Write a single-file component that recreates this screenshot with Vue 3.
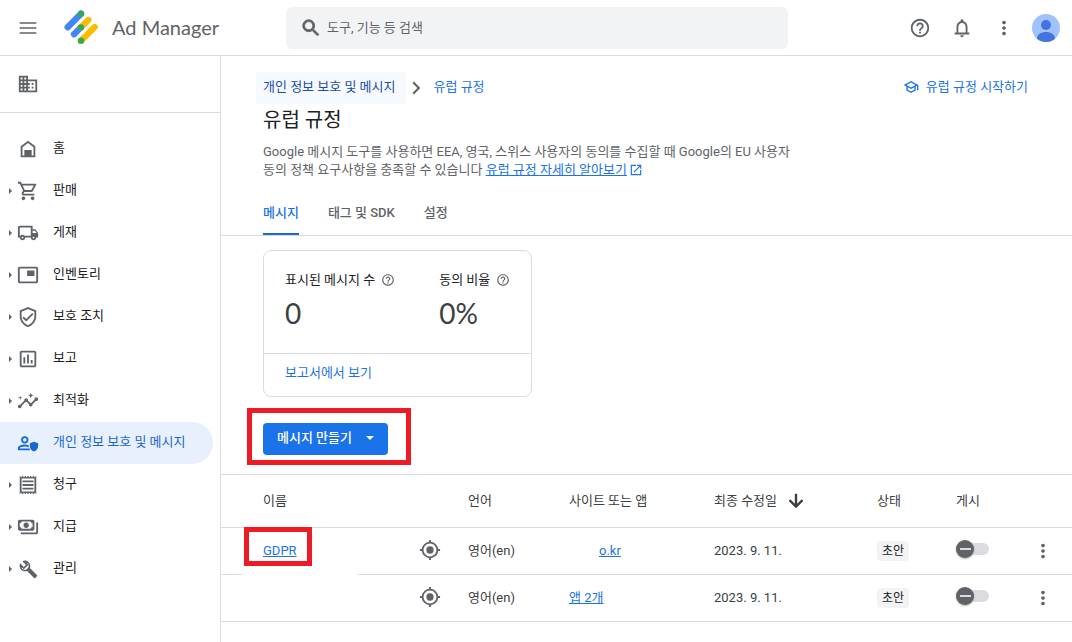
<script setup>
import { ref } from 'vue'

const icons = {
  menu: 'M2 19h20v-2H2v2zm0-6h20v-2H2v2zm0-8v2h20V5H2z',
  domain: 'M12 7V3H2v18h20V7H12zM6 19H4v-2h2v2zm0-4H4v-2h2v2zm0-4H4V9h2v2zm0-4H4V5h2v2zm4 12H8v-2h2v2zm0-4H8v-2h2v2zm0-4H8V9h2v2zm0-4H8V5h2v2zm10 12h-8v-2h2v-2h-2v-2h2v-2h-2V9h8v10zm-2-8h-2v2h2v-2zm0 4h-2v2h2v-2z',
  search: 'M15.5 14h-.79l-.28-.27A6.471 6.471 0 0 0 16 9.5 6.5 6.5 0 1 0 9.5 16c1.61 0 3.09-.59 4.23-1.57l.27.28v.79l5 4.99L20.49 19l-4.99-5zm-6 0C7.01 14 5 11.99 5 9.5S7.01 5 9.5 5 14 7.01 14 9.5 11.99 14 9.5 14z',
  help: 'M11 18h2v-2h-2v2zm1-16C6.48 2 2 6.48 2 12s4.48 10 10 10 10-4.48 10-10S17.52 2 12 2zm0 18c-4.41 0-8-3.59-8-8s3.59-8 8-8 8 3.59 8 8-3.59 8-8 8zm0-14c-2.21 0-4 1.79-4 4h2c0-1.1.9-2 2-2s2 .9 2 2c0 2-3 1.75-3 5h2c0-2.25 3-2.5 3-5 0-2.21-1.79-4-4-4z',
  bell: 'M12 22c1.1 0 2-.9 2-2h-4c0 1.1.9 2 2 2zm6-5v-6c0-3.07-1.63-5.64-4.5-6.32V4c0-.83-.67-1.5-1.5-1.5s-1.5.67-1.5 1.5v.68C7.64 5.36 6 7.92 6 11v6H4v2h16v-2h-2zm-2 0H8v-6c0-2.48 1.51-4.5 4-4.5s4 2.02 4 4.5v6z',
  more: 'M12 8c1.1 0 2-.9 2-2s-.9-2-2-2-2 .9-2 2 .9 2 2 2zm0 2c-1.1 0-2 .9-2 2s.9 2 2 2 2-.9 2-2-.9-2-2-2zm0 6c-1.1 0-2 .9-2 2s.9 2 2 2 2-.9 2-2-.9-2-2-2z',
  home: 'M12 3 4 9v12h16V9zm0 2.500L18 10v9h-2v-6H8v6H6v-9z',
  cart: 'M15.55 13c.75 0 1.41-.41 1.75-1.03l3.58-6.49A.996.996 0 0 0 20.01 4H5.21l-.94-2H1v2h2l3.6 7.59-1.35 2.44C4.52 15.37 5.48 17 7 17h12v-2H7l1.1-2h7.45zM6.16 6h12.15l-2.76 5H8.53L6.16 6zM7 18c-1.1 0-1.99.9-1.99 2S5.9 22 7 22s2-.9 2-2-.9-2-2-2zm10 0c-1.1 0-1.99.9-1.99 2s.89 2 1.99 2 2-.9 2-2-.9-2-2-2z',
  truck: 'M20 8h-3V4H3c-1.1 0-2 .9-2 2v11h2c0 1.66 1.34 3 3 3s3-1.34 3-3h6c0 1.66 1.34 3 3 3s3-1.34 3-3h2v-5l-3-4zm-.5 1.5 1.96 2.5H17V9.5h2.5zM6 18c-.55 0-1-.45-1-1s.45-1 1-1 1 .45 1 1-.45 1-1 1zm2.22-3c-.55-.61-1.33-1-2.22-1s-1.67.39-2.22 1H3V6h12v9H8.22zM18 18c-.55 0-1-.45-1-1s.45-1 1-1 1 .45 1 1-.45 1-1 1z',
  inventory: 'M19 7h-8v6h8V7zm2-4H3c-1.1 0-2 .9-2 2v14c0 1.1.9 1.98 2 1.98h18c1.1 0 2-.88 2-1.98V5c0-1.1-.9-2-2-2zm0 16.01H3V4.98h18v14.03z',
  shield: 'M12 1L3 5v6c0 5.55 3.84 10.74 9 12 5.16-1.26 9-6.45 9-12V5l-9-4zm7 10c0 4.52-2.98 8.69-7 9.93-4.02-1.24-7-5.41-7-9.93V6.3l7-3.11 7 3.11V11zm-11.59.59L6 13l4 4 8-8-1.41-1.42L10 14.17z',
  report: 'M9 17H7v-7h2v7zm4 0h-2V7h2v10zm4 0h-2v-4h2v4zm2 2H5V5h14v14zm0-16H5c-1.1 0-2 .9-2 2v14c0 1.1.9 2 2 2h14c1.1 0 2-.9 2-2V5c0-1.1-.9-2-2-2z',
  insights: 'M21 8c-1.45 0-2.26 1.44-1.93 2.51l-3.55 3.56c-.3-.09-.74-.09-1.04 0l-2.55-2.55C12.27 10.45 11.46 9 10 9c-1.45 0-2.27 1.44-1.93 2.52l-4.56 4.55C2.44 15.74 1 16.55 1 18c0 1.1.9 2 2 2 1.45 0 2.26-1.44 1.93-2.51l4.55-4.56c.3.09.74.09 1.04 0l2.55 2.55C12.73 16.55 13.54 18 15 18c1.45 0 2.27-1.44 1.93-2.52l3.56-3.55C21.56 12.26 23 11.45 23 10c0-1.1-.9-2-2-2zM15 9l.94-2.07L18 6l-2.06-.93L15 3l-.92 2.07L12 6l2.08.93zM3.5 11 4 9l2-.5L4 8l-.5-2L3 8l-2 .5L3 9z',
  privacy: 'M8.5 4.5a4 4 0 1 0 0 8 4 4 0 0 0 0-8zm0 2a2 2 0 1 1 0 4 2 2 0 0 1 0-4zM1 20v-2.5C1 15 5 13.7 8.5 13.7c1.5 0 3 .2 4.3.7v2.2c-1.3-.5-2.8-.9-4.3-.9-2.7 0-5.500 1-5.500 1.800V18h10.500l1.200 2zM18.500 10.500 14 12.300v3.200c0 2.700 1.900 5.100 4.500 5.900 2.600-.8 4.500-3.200 4.500-5.900v-3.200z',
  receipt: 'M19.5 3.5L18 2l-1.5 1.5L15 2l-1.5 1.5L12 2l-1.5 1.5L9 2 7.5 3.5 6 2 4.5 3.5 3 2v20l1.5-1.5L6 22l1.5-1.5L9 22l1.5-1.5L12 22l1.5-1.5L15 22l1.5-1.5L18 22l1.5-1.5L21 22V2l-1.5 1.5zM19 19.09H5V4.91h14v14.18zM6 15h12v2H6zm0-4h12v2H6zm0-4h12v2H6z',
  payments: 'M19 14V6c0-1.100-.9-2-2-2H3c-1.100 0-2 .9-2 2v8c0 1.100.9 2 2 2h14c1.100 0 2-.9 2-2zm-2-2c-1.100 0-2 .9-2 2H5c0-1.100-.9-2-2-2V8c1.100 0 2-.9 2-2h10c0 1.100.9 2 2 2v4zm-7-5c-1.660 0-3 1.340-3 3s1.340 3 3 3 3-1.340 3-3-1.340-3-3-3zm13 0v11c0 1.100-.9 2-2 2H4v-2h17V7h2z',
  wrench: 'M21.700 18.600l-7.600-7.600c.9-2.300.3-4.700-1.400-6.400C10.900 2.700 8 2.300 5.800 3.500L9.700 7.400 7.400 9.700 3.500 5.800C2.300 8 2.700 10.900 4.600 12.700c1.700 1.700 4.200 2.300 6.400 1.400l7.600 7.600c.4.4 1 .4 1.400 0l1.700-1.700c.4-.4.4-1 0-1.400zM5.200 10.200l2.200 2.200 5-5-2-2.200 1.200.6c1.300 1.300 1.500 3.200.6 4.700l-2 2c-1.600.8-3.500.5-4.700-.8z',
  school: 'M12 3L1 9l4 2.180v6L12 21l7-3.820v-6l2-1.090V17h2V9L12 3zm6.820 6L12 12.720 5.180 9 12 5.280 18.820 9zM17 15.990l-5 2.730-5-2.730v-3.720L12 15l5-2.730v3.720z',
  external: 'M19 19H5V5h7V3H3v18h18v-9h-2v7zM14 3v2h3.590l-9.830 9.830 1.410 1.410L19 6.410V10h2V3h-7z',
  target: 'M12 8a4 4 0 1 0 0 8 4 4 0 0 0 0-8zm8.940 3A8.994 8.994 0 0 0 13 3.060V1h-2v2.060A8.994 8.994 0 0 0 3.060 11H1v2h2.060A8.994 8.994 0 0 0 11 20.940V23h2v-2.060A8.994 8.994 0 0 0 20.940 13H23v-2h-2.060zM12 19c-3.870 0-7-3.130-7-7s3.130-7 7-7 7 3.130 7 7-3.130 7-7 7z',
  chevron: 'M8.600 5 7 6.600 12.400 12 7 17.400 8.600 19l7-7z',
  down: 'M20 12l-1.800-1.800-4.900 4.900V4h-2.600v11.100l-4.900-4.900L4 12l8 8z',
}

const nav = [
  { icon: 'home', label: '홈' },
  { icon: 'cart', label: '판매', more: true },
  { icon: 'truck', label: '게재', more: true },
  { icon: 'inventory', label: '인벤토리', more: true },
  { icon: 'shield', label: '보호 조치', more: true },
  { icon: 'report', label: '보고', more: true },
  { icon: 'insights', label: '최적화', more: true },
  { icon: 'privacy', label: '개인 정보 보호 및 메시지', active: true },
  { icon: 'receipt', label: '청구', more: true },
  { icon: 'payments', label: '지급', more: true },
  { icon: 'wrench', label: '관리', more: true },
]

const tabs = ['메시지', '태그 및 SDK', '설정']
const activeTab = ref('메시지')

const rows = ref([
  { name: 'GDPR', lang: '영어(en)', site: 'o.kr', indent: true, date: '2023. 9. 11.', status: '초안', published: false },
  { name: '', lang: '영어(en)', site: '앱 2개', indent: false, date: '2023. 9. 11.', status: '초안', published: false },
])
</script>

<template>
  <div class="app">
    <header class="topbar">
      <div class="brand">
        <button class="icon-btn" aria-label="메뉴">
          <svg class="ico s20" viewBox="0 0 24 24"><path :d="icons.menu" /></svg>
        </button>
        <svg class="logo" viewBox="0 0 102 102" fill="none" stroke-width="19" stroke-linecap="round">
          <path d="M51 11 11 52M51 52 30 73" stroke="#4285f4" />
          <path d="M73 30 51 52M92 51 51 92" stroke="#fbbc04" />
          <path d="M51 11h0M51 52h0M51 92h0" stroke="#34a853" />
        </svg>
        <span class="product">Ad Manager</span>
      </div>
      <label class="search">
        <svg class="ico s22 bold" viewBox="0 0 24 24"><path :d="icons.search" /></svg>
        <input type="text" placeholder="도구, 기능 등 검색" aria-label="검색" />
      </label>
      <div class="actions">
        <button class="icon-btn" aria-label="도움말"><svg class="ico s22" viewBox="0 0 24 24"><path :d="icons.help" /></svg></button>
        <button class="icon-btn" aria-label="알림"><svg class="ico s22" viewBox="0 0 24 24"><path :d="icons.bell" /></svg></button>
        <button class="icon-btn" aria-label="더보기"><svg class="ico s22" viewBox="0 0 24 24"><path :d="icons.more" /></svg></button>
        <button class="icon-btn" aria-label="계정">
          <svg class="avatar" viewBox="0 0 28 28">
            <circle cx="14" cy="14" r="14" fill="#a0c3ff" />
            <circle cx="14" cy="11" r="5" fill="#4374e0" />
            <path d="M5 24.700C5 20.500 9 18 14 18s9 2.500 9 6.700a14 14 0 0 1-18 0z" fill="#4374e0" />
          </svg>
        </button>
      </div>
    </header>

    <div class="body">
      <aside class="sidebar">
        <div class="network">
          <svg class="ico s22" viewBox="0 0 24 24"><path :d="icons.domain" /></svg>
        </div>
        <nav class="nav">
          <a v-for="item in nav" :key="item.label" href="#" class="nav-item" :class="{ active: item.active }">
            <span class="caret" :class="{ shown: item.more }"></span>
            <svg class="ico s22" viewBox="0 0 24 24"><path :d="icons[item.icon]" /></svg>
            <span class="nav-label">{{ item.label }}</span>
          </a>
        </nav>
      </aside>

      <main class="content">
        <div class="intro">
          <div class="crumb-row">
            <div class="crumbs">
              <a href="#" class="crumb-chip">개인 정보 보호 및 메시지</a>
              <svg class="ico s22" viewBox="0 0 24 24"><path :d="icons.chevron" /></svg>
              <a href="#" class="crumb">유럽 규정</a>
            </div>
            <a href="#" class="start">
              <svg class="ico s16" viewBox="0 0 24 24"><path :d="icons.school" /></svg>
              유럽 규정 시작하기
            </a>
          </div>
          <h1>유럽 규정</h1>
          <p>
            Google 메시지 도구를 사용하면 EEA, 영국, 스위스 사용자의 동의를 수집할 때 Google의 EU 사용자 동의 정책 요구사항을 충족할 수 있습니다
            <a href="#">유럽 규정 자세히 알아보기</a>
            <svg class="ico ext" viewBox="0 0 24 24"><path :d="icons.external" /></svg>
          </p>
        </div>

        <div class="tabs" role="tablist">
          <button
            v-for="tab in tabs"
            :key="tab"
            role="tab"
            :aria-selected="tab === activeTab"
            class="tab"
            :class="{ active: tab === activeTab }"
            @click="activeTab = tab"
          >{{ tab }}</button>
        </div>

        <section class="card">
          <div class="stats">
            <div class="stat">
              <div class="stat-label">표시된 메시지 수 <svg class="ico s14" viewBox="0 0 24 24"><path :d="icons.help" /></svg></div>
              <div class="stat-value">0</div>
            </div>
            <div class="stat">
              <div class="stat-label">동의 비율 <svg class="ico s14" viewBox="0 0 24 24"><path :d="icons.help" /></svg></div>
              <div class="stat-value">0%</div>
            </div>
          </div>
          <div class="card-foot"><a href="#">보고서에서 보기</a></div>
        </section>

        <div class="create-row">
          <div class="create-wrap">
            <button class="create">메시지 만들기 <span class="tri"></span></button>
            <span class="mark mark-create"></span>
          </div>
        </div>

        <table>
          <colgroup>
            <col class="c-name" /><col class="c-target" /><col class="c-lang" /><col />
            <col class="c-date" /><col class="c-status" /><col class="c-pub" /><col class="c-more" />
          </colgroup>
          <thead>
            <tr>
              <th class="name">이름</th>
              <th></th>
              <th>언어</th>
              <th>사이트 또는 앱</th>
              <th><span class="sort">최종 수정일 <svg class="ico s22" viewBox="0 0 24 24"><path :d="icons.down" /></svg></span></th>
              <th>상태</th>
              <th>게시</th>
              <th></th>
            </tr>
          </thead>
          <tbody>
            <tr v-for="(row, i) in rows" :key="i">
              <td class="name" :class="{ faded: row.name }">
                <span v-if="row.name" class="name-wrap">
                  <a href="#">{{ row.name }}</a>
                  <span class="mark mark-name"></span>
                </span>
              </td>
              <td class="target"><svg class="ico s22" viewBox="0 0 24 24"><path :d="icons.target" /></svg></td>
              <td>{{ row.lang }}</td>
              <td :class="{ indent: row.indent }"><a href="#">{{ row.site }}</a></td>
              <td>{{ row.date }}</td>
              <td><span class="chip">{{ row.status }}</span></td>
              <td><input v-model="row.published" type="checkbox" class="switch" aria-label="게시" /></td>
              <td class="more"><button class="icon-btn" aria-label="더보기"><svg class="ico s22" viewBox="0 0 24 24"><path :d="icons.more" /></svg></button></td>
            </tr>
          </tbody>
        </table>
      </main>
    </div>
  </div>
</template>

<style>
body {
  margin: 0;
  background: #fff;
}
</style>

<style scoped>
.app {
  display: flex;
  flex-direction: column;
  min-height: 100vh;
  box-sizing: border-box;
  font: 13px/20px Roboto, "Noto Sans CJK KR", sans-serif;
  color: #3c4043;
  background: #fff;
}
.app *,
.app *::before,
.app *::after {
  box-sizing: border-box;
}
a {
  color: #1a73e8;
}
button,
input {
  font: inherit;
  margin: 0;
}
.ico {
  display: block;
  flex: none;
  fill: #5f6368;
}
.bold {
  stroke: #5f6368;
  stroke-width: 1;
}
.s14 { width: 14px; height: 14px; }
.s16 { width: 16px; height: 16px; }
.s20 { width: 20px; height: 20px; }
.s22 { width: 22px; height: 22px; }
.icon-btn {
  display: flex;
  align-items: center;
  justify-content: center;
  width: 42px;
  height: 42px;
  padding: 0;
  border: 0;
  background: none;
}

.topbar {
  display: flex;
  align-items: center;
  height: 56px;
  padding-right: 5px;
  border-bottom: 1px solid #dadce0;
}
.brand {
  display: flex;
  align-items: center;
  flex: none;
  width: 286px;
  padding-left: 7px;
}
.logo {
  width: 34px;
  height: 34px;
  margin: 0 0 2px 15px;
}
.product {
  margin-left: 14px;
  padding-bottom: 2px;
  font: 20px/28px Lato, Roboto, sans-serif;
  color: #5f6368;
}
.search {
  display: flex;
  align-items: center;
  flex: 0 1 502px;
  height: 42px;
  padding: 0 14px;
  border-radius: 6px;
  background: #f1f3f4;
}
.search input {
  flex: 1;
  min-width: 0;
  padding: 0;
  margin-left: 5px;
  border: 0;
  outline: 0;
  background: none;
  color: #3c4043;
}
.search input::placeholder {
  color: #5f6368;
  opacity: 1;
}
.actions {
  display: flex;
  margin-left: auto;
}
.avatar {
  width: 28px;
  height: 28px;
}

.body {
  display: flex;
  flex: 1;
}
.sidebar {
  flex: none;
  width: 221px;
  border-right: 1px solid #dadce0;
}
.network {
  display: flex;
  align-items: center;
  height: 57px;
  padding-left: 17px;
  border-bottom: 1px solid #dadce0;
}
.nav {
  padding: 15px 7px 0 0;
}
.nav-item {
  display: flex;
  align-items: center;
  height: 42px;
  padding-left: 9px;
  border-radius: 0 21px 21px 0;
  color: #202124;
  text-decoration: none;
}
.nav-item.active {
  background: #e8f0fe;
  color: #1967d2;
}
.nav-item.active .ico {
  fill: #1967d2;
}
.caret {
  width: 8px;
}
.caret.shown::before {
  content: "";
  display: block;
  width: 0;
  border: 3px solid transparent;
  border-left-color: #5f6368;
  border-right: 0;
}
.nav-label {
  margin-left: 14px;
  padding-bottom: 2px;
}

.content {
  flex: 1;
  min-width: 0;
}
.intro {
  padding: 16px 44px 0 42px;
}
.crumb-row {
  display: flex;
  align-items: center;
  justify-content: space-between;
}
.crumbs {
  display: flex;
  align-items: center;
  margin-left: -7px;
}
.crumbs a,
.start {
  text-decoration: none;
}
.crumb-chip {
  padding: 5px 10px 7px 7px;
  border-radius: 4px;
  background: #f6f9fe;
  color: #174ea6;
}
.crumb {
  margin-left: 6px;
  padding-bottom: 2px;
}
.start {
  display: flex;
  align-items: center;
  gap: 7px;
  padding-bottom: 2px;
}
.start .ico,
.ext {
  fill: #1a73e8;
}
h1 {
  margin: 0;
  font-size: 20px;
  line-height: 32px;
  font-weight: 400;
  color: #202124;
}
p {
  max-width: 544px;
  margin: 7px 0 0;
  line-height: 18px;
  word-break: keep-all;
  color: #5f6368;
}
.ext {
  display: inline-block;
  width: 14px;
  height: 14px;
  margin-left: 2px;
  vertical-align: -3px;
}

.tabs {
  display: flex;
  gap: 29px;
  margin-top: 14px;
  padding: 0 42px;
  border-bottom: 1px solid #dadce0;
}
.tab {
  height: 42px;
  padding: 0;
  border: 0;
  border-bottom: 2px solid transparent;
  background: none;
  color: #5f6368;
  font-weight: 500;
}
.tab.active {
  color: #1a73e8;
  border-bottom-color: #1967d2;
}

.card {
  width: 269px;
  margin: 14px 42px 0;
  border: 1px solid #dadce0;
  border-radius: 8px;
}
.stats {
  display: flex;
  gap: 44px;
  height: 102px;
  padding: 19px 0 0 21px;
  white-space: nowrap;
}
.stat-label {
  display: flex;
  align-items: center;
  gap: 6px;
  color: #202124;
}
.stat-value {
  margin-top: 5px;
  font: 28px/36px Lato, Roboto, sans-serif;
}
.card-foot {
  padding: 9px 21px 13px;
  border-top: 1px solid #dadce0;
}
.card-foot a {
  text-decoration: none;
}

.create-row {
  display: flex;
  padding: 26px 42px 19px;
}
.create-wrap,
.name-wrap {
  position: relative;
}
.create {
  display: flex;
  align-items: center;
  gap: 14px;
  height: 32px;
  padding: 0 14px 2px;
  border: 0;
  border-radius: 4px;
  background: #1a73e8;
  color: #fff;
  font-weight: 500;
}
.tri {
  border: 4px solid transparent;
  border-top-color: #fff;
  border-bottom: 0;
}
.mark {
  position: absolute;
  border: 5px solid #ed1c24;
  pointer-events: none;
}
.mark-create {
  inset: -15px -23px -10px -16px;
}
.mark-name {
  inset: -16px -15px -8px -19px;
}

table {
  width: 100%;
  table-layout: fixed;
  border-collapse: separate;
  border-spacing: 0;
  border-top: 1px solid #dadce0;
}
.c-name { width: 189px; }
.c-target { width: 58px; }
.c-lang { width: 101px; }
.c-date { width: 163px; }
.c-status { width: 79px; }
.c-pub { width: 66px; }
.c-more { width: 50px; }
th,
td {
  padding: 0;
  border-bottom: 1px solid #dadce0;
  text-align: left;
  font-weight: 400;
  white-space: nowrap;
}
th {
  height: 53px;
}
td {
  height: 47px;
}
.name {
  padding-left: 42px;
}
.faded {
  position: relative;
}
.faded::after {
  content: "";
  position: absolute;
  left: 21px;
  bottom: -1px;
  width: 116px;
  height: 1px;
  background: #fff;
}
.target {
  padding: 0 0 2px 9px;
}
.indent {
  padding-left: 30px;
}
.sort {
  display: flex;
  align-items: center;
  gap: 8px;
}
.sort .ico {
  fill: #3c4043;
}
.chip {
  display: inline-block;
  padding: 0 5px;
  border-radius: 4px;
  background: #f1f3f4;
  color: #202124;
  font-size: 12px;
}
.switch {
  appearance: none;
  display: block;
  position: relative;
  width: 33px;
  height: 18px;
  margin-bottom: 4px;
}
.switch::before {
  content: "";
  position: absolute;
  inset: 3px 0 3px 4px;
  border-radius: 6px;
  background: #dadce0;
}
.switch::after {
  content: "";
  position: absolute;
  top: 0;
  left: 0;
  width: 18px;
  height: 18px;
  border-radius: 50%;
  background: linear-gradient(#dadce0, #dadce0) center / 11px 2px no-repeat #5f6368;
  box-shadow: 0 1px 2px rgba(60, 64, 67, 0.4);
}
.switch:checked::after {
  left: 15px;
}
.more .icon-btn {
  width: 42px;
  height: 46px;
}
</style>
